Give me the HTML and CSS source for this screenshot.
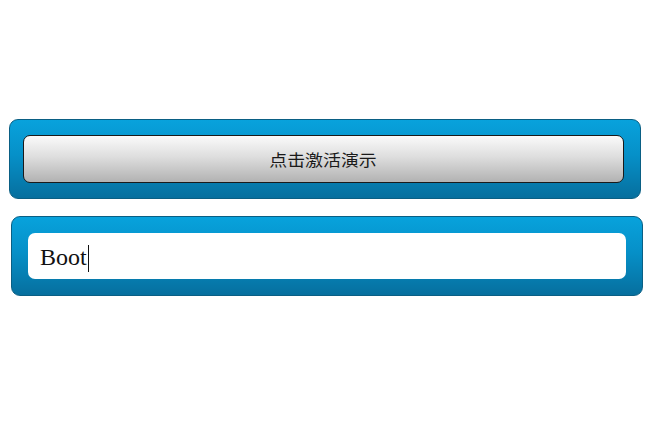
FILE: index.html
```html
<!DOCTYPE html>
<html>
<head>
<meta charset="utf-8">
<link rel="stylesheet" href="styles.css">
</head>
<body>
<div class="page">
  <div class="panel panel-one">
    <button class="demo-btn"><span class="btn-label">点击激活演示</span></button>
  </div>
  <div class="panel panel-two">
    <div class="field"><span class="field-text">Boot</span><span class="caret"></span></div>
  </div>
</div>
</body>
</html>
```
FILE: styles.css
```css
html, body {
  margin: 0;
  padding: 0;
  background: #ffffff;
}
.page {
  width: 650px;
  height: 434px;
  padding-top: 119px;
  box-sizing: border-box;
  display: flex;
  flex-direction: column;
  gap: 17px;
}
.panel {
  box-sizing: border-box;
  width: 632px;
  height: 80px;
  border-radius: 9px;
  border: 1px solid #0a5f84;
  background: linear-gradient(to bottom, #08a2dc 0%, #0690c8 45%, #066f9e 100%);
  display: flex;
}
.panel-one {
  margin-left: 9px;
  padding: 15px 16px 15px 13px;
}
.panel-two {
  margin-left: 11px;
  padding: 16px 16px 16px 16px;
}
.demo-btn {
  flex: 1;
  margin: 0;
  border: 1px solid #1a1a1a;
  border-radius: 7px;
  background: linear-gradient(to bottom, #fafafa 0%, #dedede 45%, #b2b2b2 100%);
  font-family: "Noto Sans CJK SC", sans-serif;
  font-size: 16px;
  color: #1a1a1a;
  padding: 0;
  cursor: pointer;
}
.btn-label {
  display: inline-block;
  transform: scaleX(1.12);
}
.field {
  flex: 1;
  background: #ffffff;
  border-radius: 7px;
  display: flex;
  align-items: center;
  padding-left: 12px;
}
.field-text {
  font-family: "Liberation Serif", serif;
  font-size: 24px;
  color: #111;
  line-height: 1;
  padding-top: 2px;
}
.caret {
  width: 1px;
  height: 27px;
  background: #111;
  margin-left: 1px;
  margin-top: 4px;
}
```
